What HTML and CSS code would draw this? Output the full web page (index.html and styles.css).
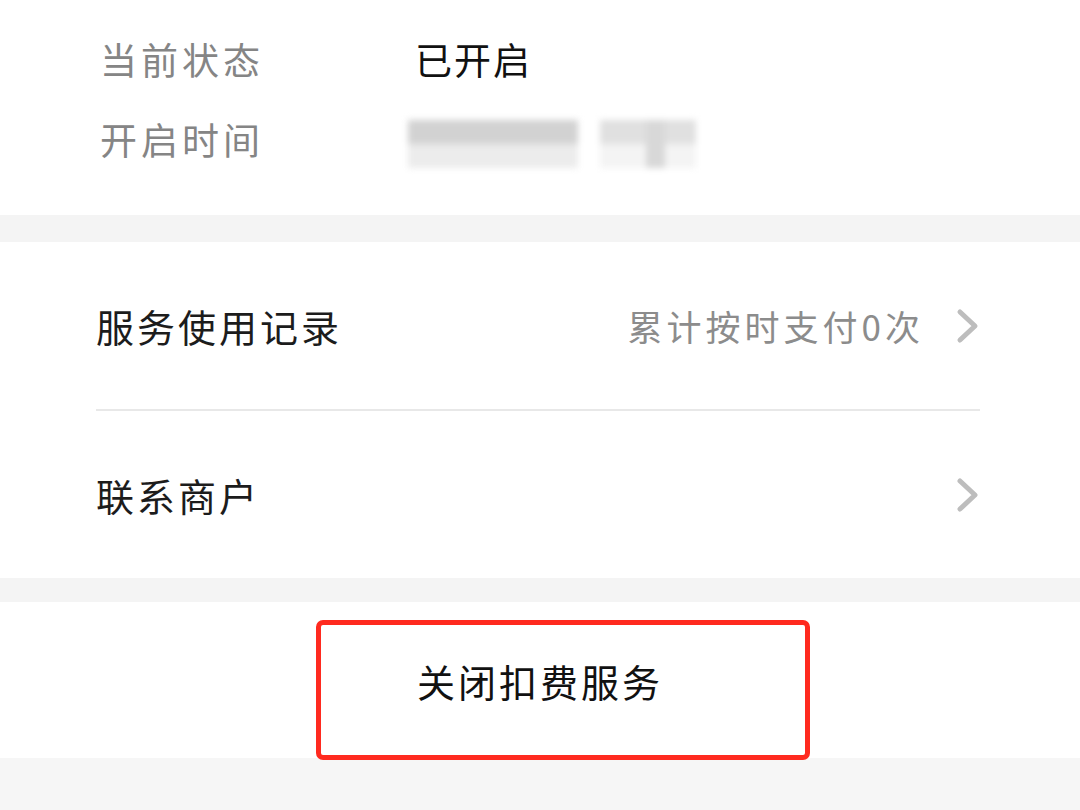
FILE: index.html
```html
<!DOCTYPE html>
<html lang="zh-CN">
<head>
<meta charset="utf-8">
<title>扣费服务</title>
<link rel="stylesheet" href="styles.css">
</head>
<body>

<!-- 状态信息 -->
<div class="info">
  <div class="info-row">
    <span class="info-label">当前状态</span>
    <span class="info-value">已开启</span>
  </div>
  <div class="info-row">
    <span class="info-label">开启时间</span>
    <span class="info-value blur-wrap">
      <span class="blur blur-a"></span>
      <span class="blur blur-b"></span>
    </span>
  </div>
</div>

<div class="gap gap-a"></div>

<!-- 列表 -->
<div class="list">
  <div class="list-row">
    <span class="list-title">服务使用记录</span>
    <span class="list-extra">累计按时支付0次</span>
    <svg class="arrow" width="24" height="36" viewBox="0 0 24 36"><polyline points="4,4 19,18 4,32" fill="none" stroke="#bdbdbd" stroke-width="5" stroke-linecap="round" stroke-linejoin="round"/></svg>
  </div>
  <div class="divider"></div>
  <div class="list-row">
    <span class="list-title">联系商户</span>
    <span class="list-extra"></span>
    <svg class="arrow" width="24" height="36" viewBox="0 0 24 36"><polyline points="4,4 19,18 4,32" fill="none" stroke="#bdbdbd" stroke-width="5" stroke-linecap="round" stroke-linejoin="round"/></svg>
  </div>
</div>

<div class="gap gap-b"></div>

<!-- 关闭按钮 -->
<div class="close-row">
  <span class="close-text">关闭扣费服务</span>
  <div class="mark"></div>
</div>

<div class="bottom"></div>

</body>
</html>
```

FILE: styles.css
```css
body {margin:0; background:#fff; font-family:"Noto Sans CJK SC", sans-serif;}

.info {padding:19px 0 36px 100px;}
.info-row {display:flex; align-items:center; height:80px;}
.info-label {width:315px; font-size:37px; letter-spacing:4px; color:#858585;}
.info-value {font-size:37px; letter-spacing:2px; color:#111;}
.blur-wrap {display:flex; gap:22px; margin-left:-7px; margin-top:10px;}
.blur {display:block; height:48px; filter:blur(3px);}
.blur-a {width:170px; background:linear-gradient(#d2d2d2 0, #d2d2d2 45%, #ececec 55%, #ececec 100%);}
.blur-b {width:96px; background:linear-gradient(90deg, transparent 0, transparent 48%, #d8d8d8 48%, #d8d8d8 68%, transparent 68%), linear-gradient(#e0e0e0 0, #e0e0e0 45%, #f4f4f4 55%, #f4f4f4 100%);}

.gap {background:#f4f4f4;}
.gap-a {height:27px;}
.gap-b {height:24px;}

.list {padding:0 100px 0 96px;}
.list-row {display:flex; align-items:center; height:167px;}
.list-title {font-size:38px; letter-spacing:3px; color:#1c1c1c;}
.list-extra {margin-left:auto; font-size:35px; letter-spacing:4px; color:#8c8c8c; margin-right:32px;}
.arrow {display:block;}
.divider {height:2px; background:#e8e8e8;}

.close-row {position:relative; display:flex; align-items:center; justify-content:center; height:156px;}
.close-text {font-size:38px; letter-spacing:3px; color:#111;}
.mark {position:absolute; left:316px; top:18px; width:484px; height:130px; border:5px solid #ff2a1f; border-radius:7px;}

.bottom {height:52px; background:#f6f6f6;}
```
